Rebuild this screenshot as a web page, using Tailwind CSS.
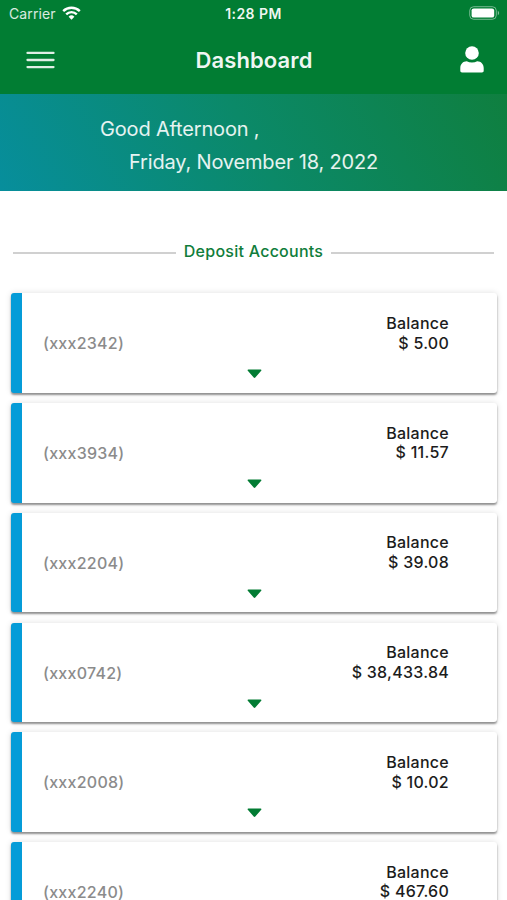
<!DOCTYPE html>
<html lang="en">
<head>
  <meta charset="UTF-8">
  <meta name="viewport" content="width=device-width, initial-scale=1.0">
  <title>Dashboard</title>
  <script src="https://cdn.jsdelivr.net/npm/@tailwindcss/browser@4"></script>
</head>

<body class="bg-white font-['Inter','Liberation_Sans',sans-serif] h-[900px] overflow-hidden">
  <!-- Status bar -->
  <div class="h-[27px] bg-[#017d33] text-white grid grid-cols-3 items-center pl-[7px] pr-[7px]">
    <div class="flex items-center gap-[6px] pl-[2px] text-[14px] tracking-[0.1px] text-white/85">
      <span>Carrier</span>
      <svg class="w-[19px] h-[14px] -mt-[1px]" viewBox="0 0 19 14" fill="none" stroke="#fff" stroke-width="2.4">
        <path d="M1.2 5.1a11.8 11.8 0 0 1 16.6 0"/>
        <path d="M4.2 8.3a7.5 7.5 0 0 1 10.6 0"/>
        <path d="M9.5 13.8 6.6 10.8a4.1 4.1 0 0 1 5.8 0z" fill="#fff" stroke="none"/>
      </svg>
    </div>
    <div class="text-center text-[14px] tracking-[0.45px] font-semibold text-white/95">1:28 PM</div>
    <svg class="w-[31px] h-[14px] justify-self-end -mt-[1px]" viewBox="0 0 31 14" fill="none">
      <rect x=".7" y=".7" width="26.6" height="12.6" rx="4" stroke="#fff" stroke-opacity=".45"/>
      <rect x="2.6" y="2.4" width="22.6" height="9.2" rx="2.2" fill="#fff"/>
      <path d="M28.8 4.8c1.8.8 1.8 3.6 0 4.4z" fill="#fff" fill-opacity=".5"/>
    </svg>
  </div>

  <!-- Nav bar -->
  <header class="h-[67px] bg-[#017d33] text-white flex items-center justify-between pl-[26px] pr-[23px]">
    <svg class="w-[29px] h-[18px] -mt-[1px]" viewBox="0 0 29 18" stroke="#fff" stroke-opacity=".88" stroke-width="2.3" stroke-linecap="round">
      <path d="M1.5 1.9h26M1.5 9h26M1.5 16.1h26"/>
    </svg>
    <h1 class="text-[22px] tracking-[0.1px] font-semibold text-white/95 -mt-[1px] mr-[2px] -ml-[5px]">Dashboard</h1>
    <svg class="w-[24px] h-[27px] -mt-[2px]" viewBox="0 0 24 27" fill="#fff">
      <circle cx="12" cy="7" r="6.8"/>
      <path d="M6.8 15.2C8.3 16 10 16.4 12 16.4s3.7-.4 5.2-1.2C21 15.2 23.7 18 23.7 22v2.8c0 1.1-.7 1.7-1.7 1.7H2c-1 0-1.7-.6-1.7-1.7V22c0-4 2.7-6.8 6.500-6.8z"/>
    </svg>
  </header>

  <!-- Greeting -->
  <section class="h-[97px] bg-linear-[62deg,#078e9c_0%,#0b8968_50%,#0f7f3f_100%] text-white/90 text-[20px] tracking-[-0.17px] leading-[33px] pt-[19px]">
    <p class="pl-[100px]">Good Afternoon ,</p>
    <p class="pl-[129px]">Friday, November 18, 2022</p>
  </section>

  <main class="pl-[11px] pr-[10px] pt-[48px]">
    <div class="flex items-center h-[24px] pl-[2px] pr-[3px] gap-[8px]">
      <div class="grow h-[2px] mt-[3px] bg-[#d0d0d0]"></div>
      <h2 class="text-[16px] tracking-[0.25px] font-medium text-[#107d3b]">Deposit Accounts</h2>
      <div class="grow h-[2px] mt-[3px] bg-[#d0d0d0]"></div>
    </div>

    <div class="flex flex-col gap-[10.2px] mt-[30.3px]">
      <div class="relative shrink-0 h-[99.6px] bg-white rounded-[3px] border-l-[11px] border-[#059cd8] shadow-[0_2px_2px_rgba(0,0,0,0.4),0_0_6px_rgba(0,0,0,0.13)] flex justify-between pl-[21px] pr-[48px] text-[16px] tracking-[0.26px] font-medium">
        <span class="pt-[40px] leading-[20px] text-[#8b8b8b]">(xxx2342)</span>
        <div class="pt-[20.5px] leading-[19.7px] text-right text-[#1c1c1c]"><p>Balance</p><p>$ 5.00</p></div>
        <svg class="absolute left-[225px] top-[76px] w-[15px] h-[10px]" viewBox="0 0 15 10" fill="#027c33"><path d="M1.3.5h12.4c.7 0 1 .7.5 1.2L8.3 8.5c-.4.5-1.2.5-1.6 0L.8 1.7C.3 1.2.6.5 1.3.5z"/></svg>
      </div>

      <div class="relative shrink-0 h-[99.6px] bg-white rounded-[3px] border-l-[11px] border-[#059cd8] shadow-[0_2px_2px_rgba(0,0,0,0.4),0_0_6px_rgba(0,0,0,0.13)] flex justify-between pl-[21px] pr-[48px] text-[16px] tracking-[0.26px] font-medium">
        <span class="pt-[40px] leading-[20px] text-[#8b8b8b]">(xxx3934)</span>
        <div class="pt-[20.5px] leading-[19.7px] text-right text-[#1c1c1c]"><p>Balance</p><p>$ 11.57</p></div>
        <svg class="absolute left-[225px] top-[76px] w-[15px] h-[10px]" viewBox="0 0 15 10" fill="#027c33"><path d="M1.3.5h12.4c.7 0 1 .7.5 1.2L8.3 8.5c-.4.5-1.2.5-1.6 0L.8 1.7C.3 1.2.6.5 1.3.5z"/></svg>
      </div>

      <div class="relative shrink-0 h-[99.6px] bg-white rounded-[3px] border-l-[11px] border-[#059cd8] shadow-[0_2px_2px_rgba(0,0,0,0.4),0_0_6px_rgba(0,0,0,0.13)] flex justify-between pl-[21px] pr-[48px] text-[16px] tracking-[0.26px] font-medium">
        <span class="pt-[40px] leading-[20px] text-[#8b8b8b]">(xxx2204)</span>
        <div class="pt-[20.5px] leading-[19.7px] text-right text-[#1c1c1c]"><p>Balance</p><p>$ 39.08</p></div>
        <svg class="absolute left-[225px] top-[76px] w-[15px] h-[10px]" viewBox="0 0 15 10" fill="#027c33"><path d="M1.3.5h12.4c.7 0 1 .7.5 1.2L8.3 8.5c-.4.5-1.2.5-1.6 0L.8 1.7C.3 1.2.6.5 1.3.5z"/></svg>
      </div>

      <div class="relative shrink-0 h-[99.6px] bg-white rounded-[3px] border-l-[11px] border-[#059cd8] shadow-[0_2px_2px_rgba(0,0,0,0.4),0_0_6px_rgba(0,0,0,0.13)] flex justify-between pl-[21px] pr-[48px] text-[16px] tracking-[0.26px] font-medium">
        <span class="pt-[40px] leading-[20px] text-[#8b8b8b]">(xxx0742)</span>
        <div class="pt-[20.5px] leading-[19.7px] text-right text-[#1c1c1c]"><p>Balance</p><p>$ 38,433.84</p></div>
        <svg class="absolute left-[225px] top-[76px] w-[15px] h-[10px]" viewBox="0 0 15 10" fill="#027c33"><path d="M1.3.5h12.4c.7 0 1 .7.5 1.2L8.3 8.5c-.4.5-1.2.5-1.6 0L.8 1.7C.3 1.2.6.5 1.3.5z"/></svg>
      </div>

      <div class="relative shrink-0 h-[99.6px] bg-white rounded-[3px] border-l-[11px] border-[#059cd8] shadow-[0_2px_2px_rgba(0,0,0,0.4),0_0_6px_rgba(0,0,0,0.13)] flex justify-between pl-[21px] pr-[48px] text-[16px] tracking-[0.26px] font-medium">
        <span class="pt-[40px] leading-[20px] text-[#8b8b8b]">(xxx2008)</span>
        <div class="pt-[20.5px] leading-[19.7px] text-right text-[#1c1c1c]"><p>Balance</p><p>$ 10.02</p></div>
        <svg class="absolute left-[225px] top-[76px] w-[15px] h-[10px]" viewBox="0 0 15 10" fill="#027c33"><path d="M1.3.5h12.4c.7 0 1 .7.5 1.2L8.3 8.5c-.4.5-1.2.5-1.6 0L.8 1.7C.3 1.2.6.5 1.3.5z"/></svg>
      </div>

      <div class="relative shrink-0 h-[99.6px] bg-white rounded-[3px] border-l-[11px] border-[#059cd8] shadow-[0_2px_2px_rgba(0,0,0,0.4),0_0_6px_rgba(0,0,0,0.13)] flex justify-between pl-[21px] pr-[48px] text-[16px] tracking-[0.26px] font-medium">
        <span class="pt-[40px] leading-[20px] text-[#8b8b8b]">(xxx2240)</span>
        <div class="pt-[20.5px] leading-[19.7px] text-right text-[#1c1c1c]"><p>Balance</p><p>$ 467.60</p></div>
      </div>
    </div>
  </main>
</body>
</html>
